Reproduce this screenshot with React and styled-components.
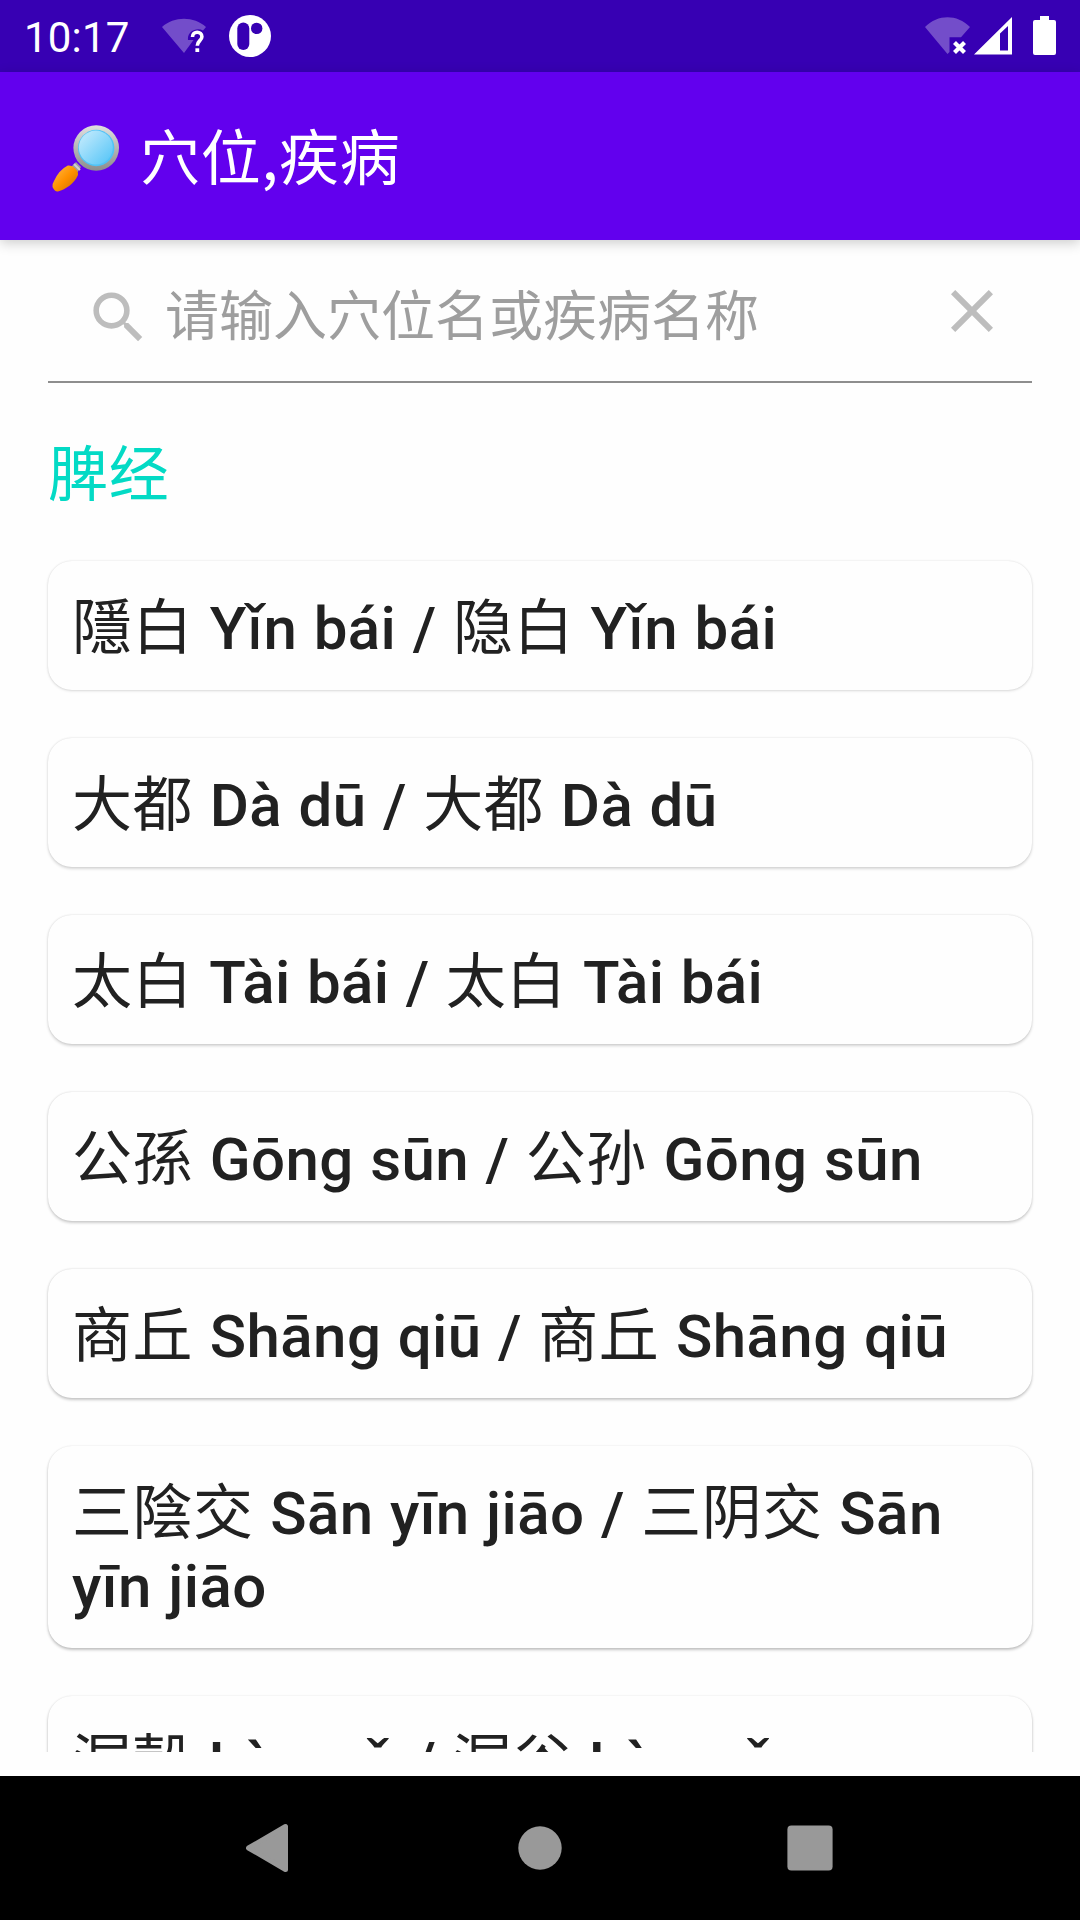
import React from 'react';
import styled, { createGlobalStyle } from 'styled-components';

const GlobalStyle = createGlobalStyle`
  *, *::before, *::after { box-sizing: border-box; }
  body {
    margin: 0;
    background: #fff;
    font-family: Roboto, "Noto Sans", "Noto Sans CJK SC", sans-serif;
  }
  svg { display: block; flex: none; }
`;

const Screen = styled.div`
  display: flex;
  flex-direction: column;
  width: 1080px;
  height: 1920px;
  overflow: hidden;
  background: #fefefe;
`;

const StatusBar = styled.header`
  display: flex;
  align-items: center;
  height: 72px;
  flex: none;
  padding: 0 24px;
  background: #3700b3;
  color: #fff;
`;

const Clock = styled.time`
  width: 138px;
  font-size: 42px;
  line-height: 72px;
  padding-top: 3px;
  letter-spacing: 0.2px;
`;

const StatusGroup = styled.div`
  display: flex;
  align-items: center;
  gap: ${(p) => p.$gap}px;
  margin-left: ${(p) => (p.$end ? 'auto' : 0)};
`;

const SignalSlot = styled.div`
  padding: 0 21px 0 4px;
`;

const AppBar = styled.div`
  display: flex;
  align-items: center;
  gap: 19px;
  height: 168px;
  flex: none;
  padding: 4px 48px 0 51px;
  background: #6200ee;
  color: #fff;
  box-shadow: 0 3px 12px rgba(0, 0, 0, 0.2);
  z-index: 1;
`;

const Title = styled.h1`
  margin: 0;
  padding-bottom: 9px;
  font-family: "Noto Sans CJK SC", sans-serif;
  font-size: 60px;
  font-weight: 400;
  line-height: 72px;
  letter-spacing: 0.75px;
`;

const Hanzi = styled.span`
  margin-right: 0.4px;
  font-weight: 400;
`;

const Body = styled.main`
  display: flex;
  flex-direction: column;
  flex: 1;
  min-height: 0;
  padding: 0 48px 24px;
`;

const SearchField = styled.label`
  display: flex;
  align-items: center;
  height: 143px;
  flex: none;
  padding: 14px 24px 0 37px;
  border-bottom: 2px solid #8e8e8e;
  color: #bdbdbd;
`;

const Placeholder = styled.span`
  flex: 1;
  padding: 0 0 0 13px;
  color: #9e9e9e;
  font-size: 54px;
  line-height: 64px;
`;

const ClearButton = styled.span`
  display: flex;
  padding-bottom: 14px;
`;

const SectionTitle = styled.h2`
  margin: 0;
  height: 172px;
  flex: none;
  padding-top: 57px;
  color: #03dac5;
  font-size: 60px;
  font-weight: 400;
  line-height: 72px;
  letter-spacing: 0.75px;
`;

const PointList = styled.ul`
  display: flex;
  flex-direction: column;
  gap: 48px;
  flex: 1;
  min-height: 0;
  margin: 0 -48px;
  padding: 6px 48px 0;
  list-style: none;
  overflow: hidden;
`;

const PointCard = styled.li`
  flex: none;
  padding: 31px 24px 25px;
  border-radius: 24px;
  background: #fefefe;
  color: #212121;
  font-size: 60px;
  font-weight: 500;
  line-height: 73px;
  letter-spacing: ${(p) => p.$tracking}px;
  word-spacing: 1px;
  box-shadow:
    0 0 2px rgba(0, 0, 0, 0.1),
    0 ${(p) => 1 + p.$depth * 0.2}px 3px rgba(0, 0, 0, ${(p) => 0.13 + p.$depth * 0.02});
`;

const NavBar = styled.nav`
  display: flex;
  align-items: center;
  justify-content: space-between;
  height: 144px;
  flex: none;
  padding: 0 247px 0 246px;
  background: #000;
`;

const WifiUnknown = () => (
  <svg width="46" height="36" viewBox="162 18 46 36">
    <path d="M162 27C174 16 194 16 206 27L203 30.500C196 27 187 32 188 40H193.500L184 53Z" fill="#fff" fillOpacity=".3" />
    <path d="M192.500 37c0-6.500 9.400-6.200 9.400-.3c0 4-4.600 4-4.600 9" fill="none" stroke="#fff" strokeWidth="3.600" />
    <rect x="195.400" y="48.300" width="3.800" height="3.700" fill="#fff" />
  </svg>
);

const AppBadge = () => (
  <svg width="42" height="42" viewBox="229 15 42 42">
    <circle cx="250" cy="36" r="21" fill="#fff" />
    <rect x="237.300" y="22.500" width="12" height="27.500" rx="6" fill="#3700b3" />
    <circle cx="256.700" cy="28.400" r="5.700" fill="#3700b3" />
  </svg>
);

const WifiOff = () => (
  <svg width="45" height="40" viewBox="925 16 45 40">
    <path d="M925 27C938 14 957 14 970 27L961 37.300H949.500V52L947.500 54Z" fill="#fff" fillOpacity=".3" />
    <path d="M954.500 42.500L964.500 52.500M964.500 42.500L954.500 52.500" stroke="#fff" strokeWidth="4.200" />
  </svg>
);

const Signal = () => (
  <svg width="38" height="40" viewBox="974 16 38 40">
    <path fillRule="evenodd" d="M1012 17V54.500H974ZM1008 26L1000 33.500V50.500H1008Z" fill="#fff" />
  </svg>
);

const Battery = () => (
  <svg width="23" height="40" viewBox="1033 16 23 40">
    <path d="M1040 16H1049V20H1054Q1056 20 1056 22V53Q1056 55 1054 55H1035Q1033 55 1033 53V22Q1033 20 1035 20H1040Z" fill="#fff" />
  </svg>
);

const Magnifier = () => (
  <svg width="70" height="68" viewBox="51 124 70 68">
    <defs>
      <linearGradient id="rim" x1="0" y1="0" x2="0" y2="1">
        <stop offset="0" stopColor="#e0e0e0" />
        <stop offset="1" stopColor="#8c8c8c" />
      </linearGradient>
      <linearGradient id="lens" x1="0" y1="0" x2="1" y2="1">
        <stop offset=".2" stopColor="#b3e5fc" />
        <stop offset="1" stopColor="#4fc3f7" />
      </linearGradient>
      <linearGradient id="grip" x1="0" y1="0" x2="1" y2="1">
        <stop offset=".25" stopColor="#ffa726" />
        <stop offset=".5" stopColor="#ff9100" />
        <stop offset="1" stopColor="#c86b00" />
      </linearGradient>
    </defs>
    <path d="M76 162L81 167L77 173L71 167Z" fill="#9e9e9e" />
    <path d="M74 164L80 170" stroke="#d0d0d0" strokeWidth="2" />
    <path d="M67 166C71 164 79 170 78 175C74 184 66 189 58 191.500Q55 192 52.500 187Q52 184 54 181Q59 170 67 166Z" fill="url(#grip)" />
    <circle cx="96.200" cy="148" r="22.800" fill="url(#rim)" />
    <circle cx="96.200" cy="148" r="18.200" fill="#4fc3f7" />
    <circle cx="95.800" cy="147.600" r="17" fill="url(#lens)" />
  </svg>
);

const SearchIcon = () => (
  <svg width="67" height="67" viewBox="0 0 24 24" fill="currentColor">
    <path d="M15.500 14h-.79l-.28-.27A6.471 6.471 0 0 0 16 9.500 6.500 6.500 0 1 0 9.500 16c1.610 0 3.090-.59 4.230-1.570l.27.28v.79l5 4.990L20.490 19l-4.990-5zm-6 0C7.010 14 5 11.990 5 9.500S7.010 5 9.500 5 14 7.010 14 9.500 11.990 14 9.500 14z" />
  </svg>
);

const CloseIcon = () => (
  <svg width="72" height="72" viewBox="0 0 24 24" fill="currentColor">
    <path d="M19 6.410L17.590 5 12 10.590 6.410 5 5 6.410 10.590 12 5 17.590 6.410 19 12 13.410 17.590 19 19 17.590 13.410 12z" />
  </svg>
);

const BackIcon = () => (
  <svg width="47" height="50" viewBox="0 0 47 50">
    <path d="M2.500 25L39.500 3.500V46.500Z" fill="#999" stroke="#999" strokeWidth="5" strokeLinejoin="round" />
  </svg>
);

const HomeIcon = () => (
  <svg width="44" height="44" viewBox="0 0 44 44">
    <circle cx="22" cy="22" r="21.700" fill="#999" />
  </svg>
);

const RecentIcon = () => (
  <svg width="46" height="46" viewBox="0 0 46 46">
    <rect x=".4" y=".4" width="45.200" height="45.200" rx="4" fill="#999" />
  </svg>
);

const points = [
  { trad: '隱白', simp: '隐白', pinyin: 'Yǐn bái' },
  { trad: '大都', simp: '大都', pinyin: 'Dà dū' },
  { trad: '太白', simp: '太白', pinyin: 'Tài bái', tracking: 0.35 },
  { trad: '公孫', simp: '公孙', pinyin: 'Gōng sūn' },
  { trad: '商丘', simp: '商丘', pinyin: 'Shāng qiū' },
  { trad: '三陰交', simp: '三阴交', pinyin: 'Sān yīn jiāo' },
  { trad: '漏穀', simp: '漏谷', pinyin: 'Lòu gǔ', tracking: 0.1 },
];

export default function App() {
  return (
    <Screen>
      <GlobalStyle />
      <StatusBar>
        <Clock>10:17</Clock>
        <StatusGroup $gap={21}>
          <WifiUnknown />
          <AppBadge />
        </StatusGroup>
        <StatusGroup $end $gap={0}>
          <WifiOff />
          <SignalSlot><Signal /></SignalSlot>
          <Battery />
        </StatusGroup>
      </StatusBar>
      <AppBar>
        <Magnifier />
        <Title>穴位,疾病</Title>
      </AppBar>
      <Body>
        <SearchField>
          <SearchIcon />
          <Placeholder>请输入穴位名或疾病名称</Placeholder>
          <ClearButton><CloseIcon /></ClearButton>
        </SearchField>
        <SectionTitle>脾经</SectionTitle>
        <PointList>
          {points.map((p, i) => (
            <PointCard key={p.trad} $depth={i} $tracking={p.tracking ?? 0.45}>
              <Hanzi>{p.trad}</Hanzi> {p.pinyin} / <Hanzi>{p.simp}</Hanzi> {p.pinyin}
            </PointCard>
          ))}
        </PointList>
      </Body>
      <NavBar>
        <BackIcon />
        <HomeIcon />
        <RecentIcon />
      </NavBar>
    </Screen>
  );
}
